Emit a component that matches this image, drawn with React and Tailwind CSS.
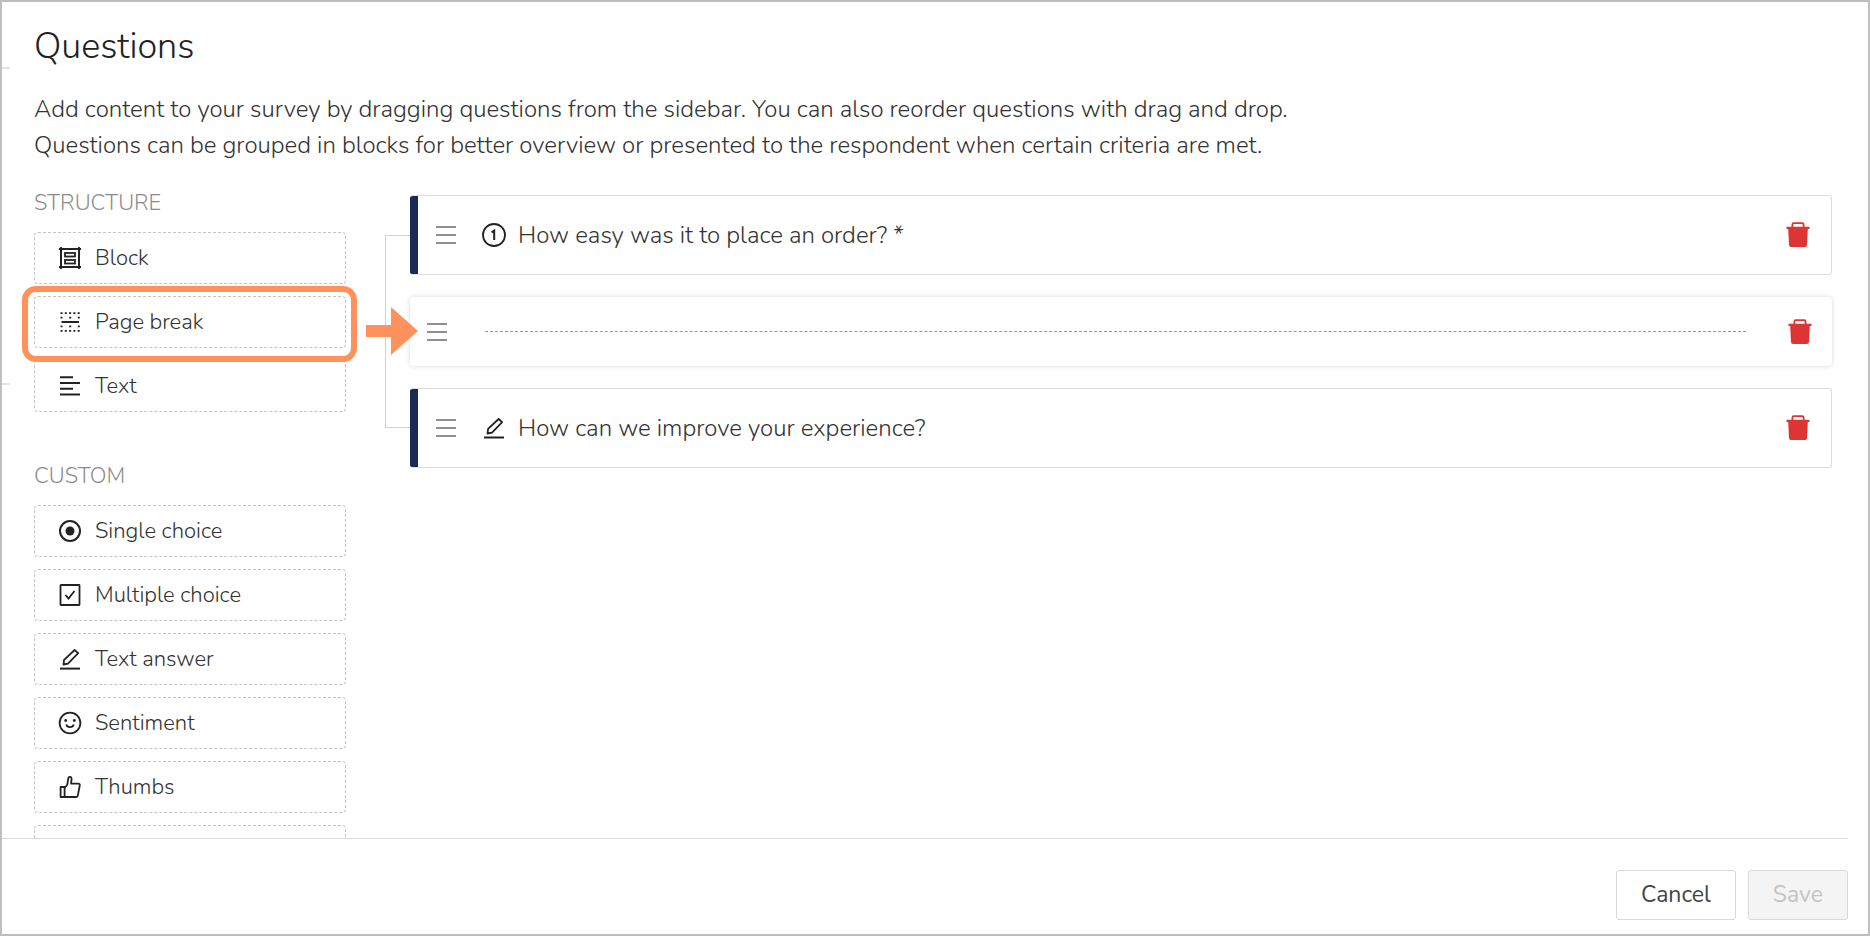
import React, { useState } from "react";

const Svg = ({ children }) => (
  <svg
    viewBox="0 0 24 24"
    className="size-6 shrink-0"
    fill="none"
    stroke="currentColor"
    strokeWidth="1.8"
    aria-hidden="true"
  >
    {children}
  </svg>
);

const BlockIcon = () => (
  <Svg>
    <rect x="3" y="3" width="18" height="18" strokeWidth="2" />
    <path d="M1 3h4M3 1v4M19 3h4M21 1v4M1 21h4M3 19v4M19 21h4M21 19v4" />
    <rect x="7" y="7" width="10" height="3.5" />
    <rect x="7" y="14" width="10" height="3.5" />
  </Svg>
);

const PageBreakIcon = () => (
  <Svg>
    <path d="M3.5 12h17.5" strokeWidth="2" />
    <path d="M2.500 3.200h20M2.500 20.800h20" strokeDasharray="2 2.3" />
    <path d="M2.5 7.6h2M11.2 7.6h2M19.8 7.6h2M2.5 16.4h2M11.2 16.4h2M19.8 16.4h2" />
  </Svg>
);

const TextIcon = () => (
  <Svg>
    <path d="M2 3.2h13M2 9h20M2 14.8h13M2 20.6h20" strokeWidth="2" />
  </Svg>
);

const SingleChoiceIcon = () => (
  <Svg>
    <circle cx="12" cy="12" r="10" strokeWidth="2" />
    <circle cx="12" cy="12" r="4.5" fill="currentColor" stroke="none" />
  </Svg>
);

const MultipleChoiceIcon = () => (
  <Svg>
    <rect x="2.5" y="2" width="19" height="20" rx="0.5" />
    <path d="M7.5 12l3 3.5 6-7.5" />
  </Svg>
);

const PencilIcon = () => (
  <Svg>
    <path d="M2 21.6h20" strokeWidth="2" />
    <path d="M5.5 17.5l.6-4.6L16.6 3l3.6 3.2L10 16.6z" strokeLinejoin="round" />
  </Svg>
);

const SentimentIcon = () => (
  <Svg>
    <circle cx="12" cy="12" r="10.4" />
    <path d="M8.3 13.5c.8 3.4 6.6 3.4 7.4 0" />
    <circle cx="7.7" cy="9.5" r="1.4" fill="currentColor" stroke="none" />
    <circle cx="16.3" cy="9.5" r="1.4" fill="currentColor" stroke="none" />
  </Svg>
);

const ThumbsIcon = () => (
  <Svg>
    <path
      d="M2.6 12h4v10h-4zM6.6 13l2.6-3.2L10.4 3c.3-1.6 3.2-1.5 3.2.8L13 8.6h7.4c1 0 1.6.6 1.4 1.6l-2 10.4c-.2.9-.8 1.4-1.6 1.4H6.6"
      strokeLinejoin="round"
    />
  </Svg>
);

const NumberOneIcon = () => (
  <Svg>
    <circle cx="12" cy="12" r="11" />
    <path d="M9.6 9.4l2.6-1.8v9.4" strokeWidth="2" />
  </Svg>
);

const DragIcon = () => (
  <svg viewBox="0 0 20 20" className="size-5 shrink-0" stroke="#909090" strokeWidth="2" aria-hidden="true">
    <path d="M0 2h20M0 10h20M0 18h20" />
  </svg>
);

const TrashIcon = () => (
  <svg viewBox="0 0 24 26" className="h-[26px] w-6" fill="#dc3533" aria-hidden="true">
    <path
      fillRule="evenodd"
      d="M.5 4.700h5V2.600Q5.500.200 7.800.200h8.400Q18.500.200 18.500 2.600v2.100h5v2.200h-1.700L21 23Q20.900 24.900 19 24.900H5q-1.900 0-2-1.900L2.200 6.900H.5zM7.300 4.700h9.400V2.800q0-.7-.7-.7H8q-.7 0-.7.7z"
    />
  </svg>
);

const structureItems = [
  { label: "Block", icon: BlockIcon },
  { label: "Page break", icon: PageBreakIcon, highlighted: true },
  { label: "Text", icon: TextIcon },
];

const customItems = [
  { label: "Single choice", icon: SingleChoiceIcon },
  { label: "Multiple choice", icon: MultipleChoiceIcon },
  { label: "Text answer", icon: PencilIcon },
  { label: "Sentiment", icon: SentimentIcon },
  { label: "Thumbs", icon: ThumbsIcon },
  { label: "", icon: null },
];

const initialRows = [
  { id: 1, type: "question", icon: NumberOneIcon, title: "How easy was it to place an order? *" },
  { id: 2, type: "break" },
  { id: 3, type: "question", icon: PencilIcon, title: "How can we improve your experience?" },
];

const SidebarGroup = ({ title, items }) => (
  <section>
    <h2 className="mb-[14px] text-[22px] leading-[30px] font-light text-[#8c8c8c]">{title}</h2>
    <ul className="space-y-3">
      {items.map((item) => (
        <li key={item.label} className="relative">
          <button
            type="button"
            draggable
            aria-label={item.label || "More"}
            className="flex h-[52px] w-full items-center gap-[13px] rounded border border-dashed border-[#c4c4c4] pl-[23px] text-left text-[22px] font-light text-[#333]"
          >
            {item.icon && (
              <span className="text-[#222]">
                <item.icon />
              </span>
            )}
            {item.label}
          </button>
          {item.highlighted && (
            <>
              <span className="pointer-events-none absolute -top-[10px] -right-[11px] -bottom-[14px] -left-3 z-10 rounded-[14px] border-6 border-[#ff915d]" />
              <svg
                viewBox="0 0 52 50"
                className="pointer-events-none absolute top-[10px] left-full z-10 ml-5 h-[50px] w-[52px]"
                fill="#ff915d"
                aria-hidden="true"
              >
                <path d="M0 19h25V1l27 24-27 24V31H0z" />
              </svg>
            </>
          )}
        </li>
      ))}
    </ul>
  </section>
);

const DeleteButton = ({ onClick }) => (
  <button type="button" aria-label="Delete" onClick={onClick} className="ml-auto shrink-0">
    <TrashIcon />
  </button>
);

const App = () => {
  const [rows, setRows] = useState(initialRows);

  const removeRow = (id) => {
    setRows((prev) => prev.filter((row) => row.id !== id));
  };

  return (
    <div className="relative flex h-screen flex-col border-2 border-[#bfbfbf] bg-white font-['Nunito','Noto_Sans',sans-serif]">
      <span className="absolute top-[65px] left-0 h-0.5 w-2 bg-[#e4e4e4]" />
      <span className="absolute top-[381px] left-0 h-0.5 w-2 bg-[#e4e4e4]" />

      <main className="min-h-0 flex-1 overflow-hidden pt-[21px] pr-9 pl-8">
        <h1 className="text-[36px] leading-[48px] font-light text-[#222]">Questions</h1>
        <p className="mt-5 text-[24px] leading-9 font-light text-[#333]">
          Add content to your survey by dragging questions from the sidebar. You can also reorder questions with drag and drop.
          <br />
          Questions can be grouped in blocks for better overview or presented to the respondent when certain criteria are met.
        </p>

        <div className="mt-[25px] flex items-start">
          <aside className="w-[312px] shrink-0 space-y-[49px]">
            <SidebarGroup title="STRUCTURE" items={structureItems} />
            <SidebarGroup title="CUSTOM" items={customItems} />
          </aside>

          <div className="mt-[7px] ml-[39px] flex min-w-0 flex-1">
            {/* bracket that ties the questions together */}
            <div className="my-10 w-[25px] shrink-0 border-y border-l border-[#d2d2d2]" />
            <ul className="min-w-0 flex-1 space-y-[22px]">
              {rows.map((row) =>
                row.type === "break" ? (
                  <li
                    key={row.id}
                    className="flex h-[69px] items-center rounded bg-white pr-5 pl-[17px] shadow-[0_0_5px_rgba(0,0,0,0.16)]"
                  >
                    <DragIcon />
                    <hr className="mr-[42px] ml-[38px] flex-1 border-t border-dashed border-[#999]" />
                    <DeleteButton onClick={() => removeRow(row.id)} />
                  </li>
                ) : (
                  <li
                    key={row.id}
                    className="flex h-20 items-stretch overflow-hidden rounded-[3px] border border-l-0 border-[#dcdcdc] bg-white"
                  >
                    <span className="w-2 shrink-0 bg-[#172b56]" />
                    <div className="flex flex-1 items-center pr-[21px] pl-[18px]">
                      <DragIcon />
                      <span className="ml-[26px] text-[#222]">
                        <row.icon />
                      </span>
                      <span className="ml-3 text-[24px] font-light text-[#333]">{row.title}</span>
                      <DeleteButton onClick={() => removeRow(row.id)} />
                    </div>
                  </li>
                )
              )}
            </ul>
          </div>
        </div>
      </main>

      <footer className="mr-5 flex justify-end gap-3 border-t border-[#d9d9d9] pt-[31px] pb-[14px]">
        <button type="button" className="h-[50px] rounded-[3px] border border-[#d9d9d9] px-6 text-[23px] text-[#444]">
          Cancel
        </button>
        <button
          type="button"
          disabled
          className="h-[50px] rounded-[3px] border border-[#d9d9d9] bg-[#f4f4f4] px-6 text-[23px] text-[#c3c3c3]"
        >
          Save
        </button>
      </footer>
    </div>
  );
};

export default App;
